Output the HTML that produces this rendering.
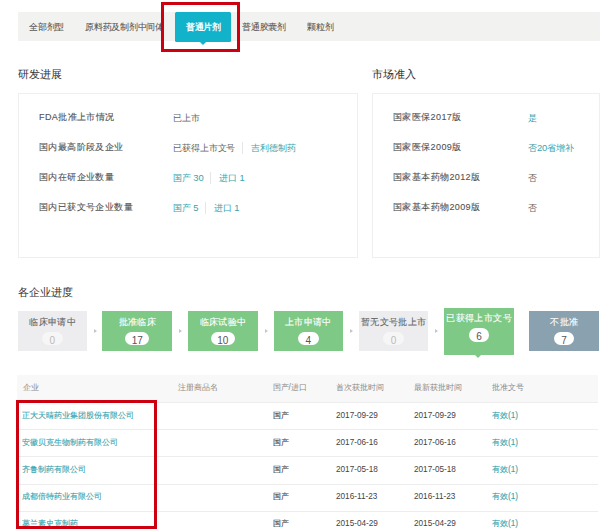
<!DOCTYPE html>
<html><head><meta charset="utf-8">
<style>
*{margin:0;padding:0;box-sizing:border-box}
html,body{width:600px;height:529px;overflow:hidden;background:#fff}
body{position:relative;font-family:"Liberation Sans",sans-serif;color:#666;font-size:9.4px;line-height:1}
.a{position:absolute;white-space:nowrap}
.tabbar{position:absolute;left:18px;top:12px;width:582px;height:29px;background:rgb(242,243,241)}
.tab{position:absolute;top:23px;-webkit-text-stroke:0.08px currentColor;font-size:9px;letter-spacing:-0.25px;color:#555;line-height:9px}
.act{position:absolute;left:174.5px;top:11.5px;width:56.5px;height:30px;background:rgb(18,178,202);border-radius:1.5px}
.act:after{content:"";position:absolute;left:25px;top:30px;border-left:3.5px solid transparent;border-right:3.5px solid transparent;border-top:3px solid rgb(18,178,202)}
.acttxt{position:absolute;left:186px;top:22.8px;font-size:9px;letter-spacing:-0.4px;line-height:9px;color:#fff;font-weight:bold}
.redbox{position:absolute;border:3px solid #cc000e}
.h{position:absolute;font-size:11px;color:#333;line-height:11px}
.panel{position:absolute;border:1px solid #efefef;background:#fff}
.lbl{position:absolute;color:#525252;-webkit-text-stroke:0.1px currentColor;line-height:9px;font-size:9px;letter-spacing:0.4px;margin-top:0.4px}
.val{position:absolute;color:#666;line-height:9px;letter-spacing:-0.1px}
.a.t,.t{color:#35a4ae}
.sep{display:inline-block;width:1px;height:12px;background:#e6e6e6;vertical-align:middle;margin:0 8.3px 0 6.3px;position:relative;top:-1px}
.stage{position:absolute;top:311px;width:69.6px;height:40px;text-align:center;color:#fff}
.stage .st{position:absolute;left:0;right:0;top:7px;-webkit-text-stroke:0.12px currentColor;font-size:9px;letter-spacing:0.35px;text-indent:0.35px;line-height:9px}
.stage .pw{position:absolute;left:0;right:0;top:20.7px;text-align:center;font-size:0}
.stage .pill{display:inline-block;min-width:20.5px;padding:0 6.3px;height:13.6px;border-radius:7px;background:#fff;color:#555;font-size:10px;line-height:17px}
.g{background:#7fc987}
.gr{background:rgb(237,237,239)}
.gr .st{color:#666}
.gr .pill{background:#f6f6f6;color:#bbb}
.bl{background:rgb(138,162,175)}
.arr{position:absolute;top:328.5px;width:0;height:0;border-top:2.6px solid transparent;border-bottom:2.6px solid transparent;border-left:3.8px solid #c6c6c6}
.thead{position:absolute;left:17px;top:375px;width:581px;height:27px;background:#f8f8f9}
.th{position:absolute;top:383.3px;font-size:8.4px;line-height:8px;color:#888}
.hl{position:absolute;left:17px;width:581px;height:1px;background:#ededed}
.td{position:absolute;font-size:8.2px;line-height:8px;color:#444;-webkit-text-stroke:0.1px currentColor}
.a.dt{-webkit-text-stroke:0;color:#444}
</style></head><body>
<div class="tabbar"></div>
<div class="a tab" style="left:29px">全部剂型</div>
<div class="a tab" style="left:85px">原料药及制剂中间体</div>
<div class="a tab" style="left:242px">普通胶囊剂</div>
<div class="a tab" style="left:307px">颗粒剂</div>
<div class="act"></div>
<div class="a acttxt">普通片剂</div>
<div class="redbox" style="left:161px;top:2px;width:79px;height:50px"></div>

<div class="a h" style="left:18px;top:69px">研发进展</div>
<div class="a h" style="left:372px;top:69px">市场准入</div>
<div class="panel" style="left:18px;top:93px;width:340px;height:165px"></div>
<div class="panel" style="left:372px;top:93px;width:228px;height:165px"></div>

<div class="a lbl" style="left:39px;top:112.5px">FDA批准上市情况</div>
<div class="a lbl" style="left:39px;top:142.5px">国内最高阶段及企业</div>
<div class="a lbl" style="left:39px;top:172.5px">国内在研企业数量</div>
<div class="a lbl" style="left:39px;top:202.5px">国内已获文号企业数量</div>
<div class="a val" style="left:173px;top:112.5px">已上市</div>
<div class="a val" style="left:173px;top:142.5px">已获得上市文号<span class="sep"></span><span class="t">吉利德制药</span></div>
<div class="a val t" style="left:173px;top:172.5px">国产 30<span class="sep"></span>进口 1</div>
<div class="a val t" style="left:173px;top:202.5px">国产 5<span class="sep"></span>进口 1</div>

<div class="a lbl" style="left:393px;top:112.5px">国家医保2017版</div>
<div class="a lbl" style="left:393px;top:142.5px">国家医保2009版</div>
<div class="a lbl" style="left:393px;top:172.5px">国家基本药物2012版</div>
<div class="a lbl" style="left:393px;top:202.5px">国家基本药物2009版</div>
<div class="a val t" style="left:528px;top:112.5px">是</div>
<div class="a val t" style="left:528px;top:142.5px">否20省增补</div>
<div class="a val" style="left:528px;top:172.5px">否</div>
<div class="a val" style="left:528px;top:202.5px">否</div>

<div class="a h" style="left:18px;top:287px">各企业进度</div>

<div class="stage gr" style="left:18px;width:68.8px"><div class="st">临床申请中</div><div class="pw"><span class="pill">0</span></div></div>
<div class="arr" style="left:93.8px"></div>
<div class="stage g" style="left:102.3px;width:70px"><div class="st">批准临床</div><div class="pw"><span class="pill">17</span></div></div>
<div class="arr" style="left:179px"></div>
<div class="stage g" style="left:188px"><div class="st">临床试验中</div><div class="pw"><span class="pill">10</span></div></div>
<div class="arr" style="left:264.6px"></div>
<div class="stage g" style="left:273.5px"><div class="st">上市申请中</div><div class="pw"><span class="pill">4</span></div></div>
<div class="arr" style="left:350px"></div>
<div class="stage gr" style="left:358.7px"><div class="st">暂无文号批上市</div><div class="pw"><span class="pill">0</span></div></div>
<div class="arr" style="left:435.3px"></div>
<div class="stage g" style="left:444.2px;top:307.5px;height:47.2px"><div class="st" style="top:6.7px">已获得上市文号</div><div class="pw"><span class="pill">6</span></div></div>
<div class="a" style="left:475.3px;top:354.7px;width:0;height:0;border-left:3.5px solid transparent;border-right:3.5px solid transparent;border-top:3.5px solid #7fc987"></div>
<div class="stage bl" style="left:529.3px"><div class="st">不批准</div><div class="pw"><span class="pill">7</span></div></div>

<div class="thead"></div>
<div class="hl" style="top:401.5px"></div>
<div class="hl" style="top:429px"></div>
<div class="hl" style="top:456px"></div>
<div class="hl" style="top:483.5px"></div>
<div class="hl" style="top:510.5px"></div>
<div class="a th" style="left:23px">企业</div>
<div class="a th" style="left:178px">注册商品名</div>
<div class="a th" style="left:272.5px">国产/进口</div>
<div class="a th" style="left:336px">首次获批时间</div>
<div class="a th" style="left:414px">最新获批时间</div>
<div class="a th" style="left:492px">批准文号</div>

<div class="a td t" style="left:22.4px;top:411.5px">正大天晴药业集团股份有限公司</div>
<div class="a td t" style="left:22.4px;top:438.5px">安徽贝克生物制药有限公司</div>
<div class="a td t" style="left:22.4px;top:465.5px">齐鲁制药有限公司</div>
<div class="a td t" style="left:22.4px;top:492.5px">成都倍特药业有限公司</div>
<div class="a td t" style="left:22.4px;top:519.5px">葛兰素史克制药</div>
<div class="a td" style="left:272.5px;top:411.5px">国产</div>
<div class="a td dt" style="left:336px;top:411.5px">2017-09-29</div>
<div class="a td dt" style="left:414px;top:411.5px">2017-09-29</div>
<div class="a td t" style="left:492px;top:411.5px">有效(1)</div>
<div class="a td" style="left:272.5px;top:438.5px">国产</div>
<div class="a td dt" style="left:336px;top:438.5px">2017-06-16</div>
<div class="a td dt" style="left:414px;top:438.5px">2017-06-16</div>
<div class="a td t" style="left:492px;top:438.5px">有效(1)</div>
<div class="a td" style="left:272.5px;top:465.5px">国产</div>
<div class="a td dt" style="left:336px;top:465.5px">2017-05-18</div>
<div class="a td dt" style="left:414px;top:465.5px">2017-05-18</div>
<div class="a td t" style="left:492px;top:465.5px">有效(1)</div>
<div class="a td" style="left:272.5px;top:492.5px">国产</div>
<div class="a td dt" style="left:336px;top:492.5px">2016-11-23</div>
<div class="a td dt" style="left:414px;top:492.5px">2016-11-23</div>
<div class="a td t" style="left:492px;top:492.5px">有效(1)</div>
<div class="a td" style="left:272.5px;top:519.5px">国产</div>
<div class="a td dt" style="left:336px;top:519.5px">2015-04-29</div>
<div class="a td dt" style="left:414px;top:519.5px">2015-04-29</div>
<div class="a td t" style="left:492px;top:519.5px">有效(1)</div>
<div class="redbox" style="left:16px;top:400px;width:141px;height:129px"></div>
</body></html>
